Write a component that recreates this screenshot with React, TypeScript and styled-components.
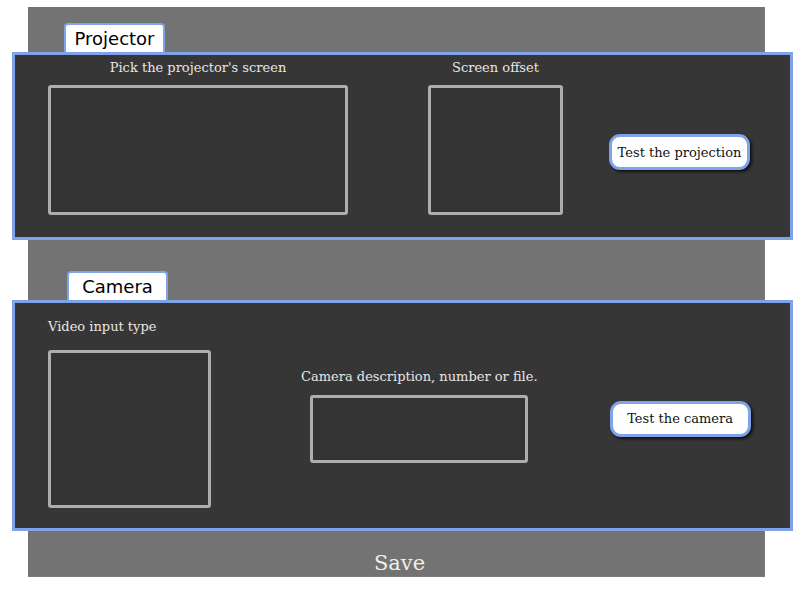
import * as React from 'react';
import styled, { createGlobalStyle } from 'styled-components';

const GlobalStyle = createGlobalStyle`
  body {
    margin: 0;
    background: #ffffff;
    font-family: "DejaVu Serif", serif;
  }
`;

const Page = styled.div`
  box-sizing: border-box;
  width: 737px;
  height: 570px;
  margin: 7px 0 0 28px;
  padding-top: 16px;
  background: #737373;
  border-right: 1px solid #7c7c7c;
  border-bottom: 1px solid #7c7c7c;
  display: flex;
  flex-direction: column;
`;

const Section = styled.section<{ $gap?: number }>`
  display: flex;
  flex-direction: column;
  margin-top: ${({ $gap }) => $gap ?? 0}px;
`;

const Tab = styled.div<{ $indent: number }>`
  box-sizing: border-box;
  width: 101px;
  height: 29px;
  padding-bottom: 1px;
  margin-left: ${({ $indent }) => $indent}px;
  background: #ffffff;
  border: 2px solid #7fa3e8;
  border-bottom: none;
  border-radius: 4px 4px 0 0;
  display: flex;
  align-items: center;
  justify-content: center;
  font-family: "DejaVu Sans", sans-serif;
  font-size: 18px;
  color: #000000;
`;

const Panel = styled.div<{ $padding: string }>`
  box-sizing: border-box;
  width: 781px;
  margin-left: -16px;
  padding: ${({ $padding }) => $padding};
  background: #363636;
  border: 3px solid #7fa3e8;
  display: flex;
  flex-direction: row;
  align-items: center;
`;

const Field = styled.div<{
  $align: 'center' | 'flex-start';
  $gap: number;
  $space?: number;
  $shift?: number;
}>`
  display: flex;
  flex-direction: column;
  align-items: ${({ $align }) => $align};
  gap: ${({ $gap }) => $gap}px;
  margin-right: ${({ $space }) => $space ?? 0}px;
  margin-top: ${({ $shift }) => $shift ?? 0}px;
`;

const Label = styled.span`
  font-size: 13px;
  line-height: 15px;
  color: #e6e6e6;
  white-space: nowrap;
`;

const Slot = styled.div<{ $w: number; $h: number }>`
  box-sizing: border-box;
  width: ${({ $w }) => $w}px;
  height: ${({ $h }) => $h}px;
  background: #333333;
  border: 3px solid #adadad;
  border-radius: 3px;
`;

const TestButton = styled.button<{ $shift: number }>`
  box-sizing: border-box;
  width: 141px;
  height: 36px;
  margin-top: ${({ $shift }) => $shift}px;
  padding: 0;
  background: #ffffff;
  border: 3px solid #7fa3e8;
  border-radius: 11px;
  box-shadow: 2px 2px 3px rgba(0, 0, 0, 0.7);
  font-family: "DejaVu Serif", serif;
  font-size: 13px;
  color: #111111;
  cursor: pointer;
`;

const SaveBar = styled.div`
  flex: 1;
  display: flex;
  justify-content: center;
  padding: 20px 0 0 7px;
  font-size: 21px;
  color: #eeeeee;
  cursor: pointer;
`;

const App = () => {
  return (
    <>
      <GlobalStyle />
      <Page>
        <Section>
          <Tab $indent={36}>Projector</Tab>
          <Panel $padding="5px 0 22px 33px">
            <Field $align="center" $gap={10} $space={80}>
              <Label>Pick the projector's screen</Label>
              <Slot $w={300} $h={130} />
            </Field>
            <Field $align="center" $gap={10} $space={46}>
              <Label>Screen offset</Label>
              <Slot $w={135} $h={130} />
            </Field>
            <TestButton type="button" $shift={29}>
              Test the projection
            </TestButton>
          </Panel>
        </Section>
        <Section $gap={31}>
          <Tab $indent={39}>Camera</Tab>
          <Panel $padding="16px 0 20px 33px">
            <Field $align="flex-start" $gap={16} $space={90}>
              <Label>Video input type</Label>
              <Slot $w={163} $h={158} />
            </Field>
            <Field $align="center" $gap={11} $space={72} $shift={5}>
              <Label>Camera description, number or file.</Label>
              <Slot $w={218} $h={68} />
            </Field>
            <TestButton type="button" $shift={10}>
              Test the camera
            </TestButton>
          </Panel>
        </Section>
        <SaveBar>Save</SaveBar>
      </Page>
    </>
  );
};

export default App;
